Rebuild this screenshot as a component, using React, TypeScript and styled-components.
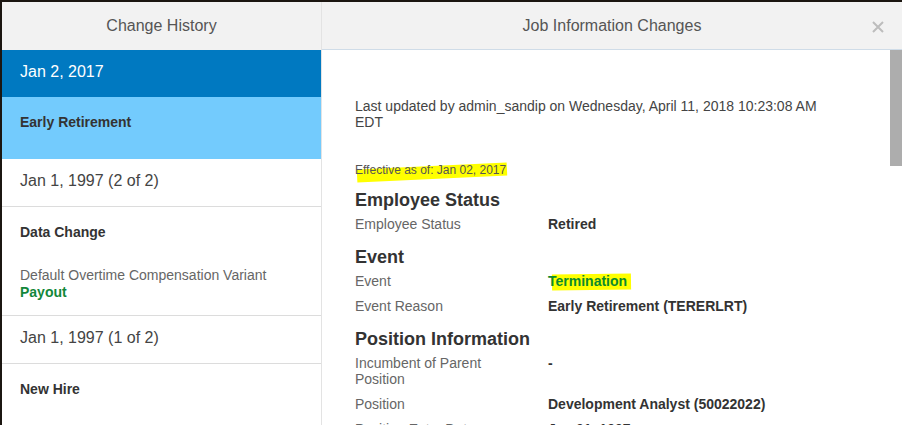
import styled, { createGlobalStyle } from "styled-components";

const GlobalStyle = createGlobalStyle`
  html, body {
    margin: 0;
    padding: 0;
    height: 100%;
    overflow: hidden;
    background-color: #1b1611;
    font-family: "Liberation Sans", Arial, sans-serif;
  }
`;

const Dialog = styled.div`
  margin: 2px 0 0 2px;
  width: calc(100vw - 2px);
  height: calc(100vh - 2px);
  background-color: #fff;
  display: grid;
  grid-template-columns: 320px 1fr;
  overflow: hidden;
`;

const HistoryColumn = styled.aside`
  display: flex;
  flex-direction: column;
  border-right: 1px solid #e3e3e3;
  min-height: 0;
  overflow: hidden;
`;

const DetailColumn = styled.section`
  display: flex;
  flex-direction: column;
  min-height: 0;
`;

const Header = styled.header<{ $divided?: boolean }>`
  position: relative;
  box-sizing: border-box;
  flex: 0 0 48px;
  display: flex;
  align-items: center;
  justify-content: center;
  background-color: #f2f2f2;
  color: #555;
  font-size: 16px;
  border-bottom: ${(p) => (p.$divided ? "1px solid #cfdce8" : "none")};
`;

const CloseButton = styled.button`
  position: absolute;
  right: 17px;
  top: 18px;
  width: 14px;
  height: 14px;
  padding: 0;
  border: none;
  background: none;
  display: flex;
  align-items: center;
  justify-content: center;
  cursor: pointer;
`;

const DateRow = styled.div<{ $active?: boolean }>`
  box-sizing: border-box;
  flex: 0 0 ${(p) => (p.$active ? 47 : 48)}px;
  display: flex;
  align-items: center;
  padding: 0 18px 3px;
  font-size: 16px;
  color: ${(p) => (p.$active ? "#fff" : "#444")};
  background-color: ${(p) => (p.$active ? "#0079c1" : "#fff")};
  border-bottom: ${(p) => (p.$active ? "none" : "1px solid #dcdcdc")};
`;

const ChangeBlock = styled.div<{ $active?: boolean }>`
  flex: none;
  display: flex;
  flex-direction: column;
  padding: 17px 18px 14px;
  background-color: ${(p) => (p.$active ? "#73cbfd" : "#fff")};
  border-bottom: 1px solid ${(p) => (p.$active ? "#73cbfd" : "#dcdcdc")};
`;

const ChangeTitle = styled.div`
  font-size: 14px;
  line-height: 16px;
  font-weight: bold;
  color: #333;
  margin-bottom: 14px;
`;

const ChangeDesc = styled.div`
  margin-top: 13px;
  font-size: 14px;
  line-height: 17px;
  color: #666;
`;

const NewValue = styled.div`
  font-weight: bold;
  color: #12873a;
`;

const DetailBody = styled.div`
  flex: 1;
  min-height: 0;
  display: flex;
`;

const Content = styled.div`
  flex: 1;
  display: flex;
  flex-direction: column;
  padding: 48px 0 0 33px;
  overflow: hidden;
`;

const ScrollTrack = styled.div`
  flex: 0 0 12px;
`;

const ScrollThumb = styled.div`
  height: 116px;
  background-color: #adadad;
`;

const Updated = styled.p`
  margin: 0;
  max-width: 485px;
  font-size: 14px;
  line-height: 16px;
  color: #444;
`;

const Effective = styled.p`
  margin: 33px 0 7px;
  font-size: 12px;
  line-height: 14px;
  color: #555;
`;

const Marker = styled.span<{ $tight?: boolean }>`
  position: relative;
  z-index: 0;
  &::before {
    content: "";
    position: absolute;
    z-index: -1;
    background-color: #ffff00;
    left: ${(p) => (p.$tight ? 4 : 2)}px;
    right: ${(p) => (p.$tight ? -4 : -1)}px;
    top: ${(p) => (p.$tight ? 1 : 3)}px;
    height: ${(p) => (p.$tight ? 16 : 13)}px;
    transform: rotate(${(p) => (p.$tight ? -0.8 : -2.7)}deg);
  }
`;

const GroupHeading = styled.h3`
  margin: 6px 0;
  font-size: 18px;
  line-height: 20px;
  font-weight: bold;
  color: #333;
`;

const FieldRow = styled.div`
  display: grid;
  grid-template-columns: 193px 1fr;
  font-size: 14px;
  line-height: 16px;
  padding-bottom: 9px;
`;

const FieldLabel = styled.span`
  color: #666;
  padding-right: 30px;
`;

const FieldValue = styled.span<{ $changed?: boolean }>`
  font-weight: bold;
  color: ${(p) => (p.$changed ? "#0c8a2e" : "#333")};
`;

const groups = [
  {
    title: "Employee Status",
    fields: [{ label: "Employee Status", value: "Retired" }],
  },
  {
    title: "Event",
    fields: [
      { label: "Event", value: "Termination", changed: true },
      { label: "Event Reason", value: "Early Retirement (TERERLRT)" },
    ],
  },
  {
    title: "Position Information",
    fields: [
      { label: "Incumbent of Parent Position", value: "-" },
      { label: "Position", value: "Development Analyst (50022022)" },
      { label: "Position Entry Date", value: "Jan 01, 1997" },
    ],
  },
];

const App = () => {
  return (
    <>
      <GlobalStyle />
      <Dialog>
        <HistoryColumn>
          <Header>Change History</Header>
          <DateRow $active>Jan 2, 2017</DateRow>
          <ChangeBlock $active>
            <ChangeTitle>Early Retirement</ChangeTitle>
          </ChangeBlock>
          <DateRow>Jan 1, 1997 (2 of 2)</DateRow>
          <ChangeBlock>
            <ChangeTitle>Data Change</ChangeTitle>
            <ChangeDesc>
              Default Overtime Compensation Variant
              <NewValue>Payout</NewValue>
            </ChangeDesc>
          </ChangeBlock>
          <DateRow>Jan 1, 1997 (1 of 2)</DateRow>
          <ChangeBlock>
            <ChangeTitle>New Hire</ChangeTitle>
          </ChangeBlock>
        </HistoryColumn>

        <DetailColumn>
          <Header $divided>
            Job Information Changes
            <CloseButton title="Close">
              <svg width="12" height="12" viewBox="0 0 12 12">
                <path
                  d="M1 1 L11 11 M11 1 L1 11"
                  stroke="#bdbdbd"
                  strokeWidth="2"
                  fill="none"
                />
              </svg>
            </CloseButton>
          </Header>
          <DetailBody>
            <Content>
              <Updated>
                Last updated by admin_sandip on Wednesday, April 11, 2018
                10:23:08 AM EDT
              </Updated>
              <Effective>
                <Marker>Effective as of: Jan 02, 2017</Marker>
              </Effective>
              {groups.map((group) => (
                <div key={group.title}>
                  <GroupHeading>{group.title}</GroupHeading>
                  {group.fields.map((field) => (
                    <FieldRow key={field.label}>
                      <FieldLabel>{field.label}</FieldLabel>
                      <FieldValue $changed={field.changed}>
                        {field.changed ? (
                          <Marker $tight>{field.value}</Marker>
                        ) : (
                          field.value
                        )}
                      </FieldValue>
                    </FieldRow>
                  ))}
                </div>
              ))}
            </Content>
            <ScrollTrack>
              <ScrollThumb />
            </ScrollTrack>
          </DetailBody>
        </DetailColumn>
      </Dialog>
    </>
  );
};

export default App;
